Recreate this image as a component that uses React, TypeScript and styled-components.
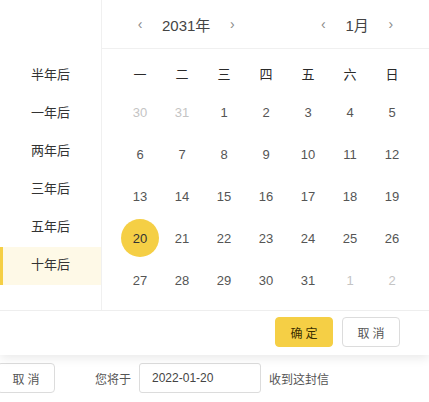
import * as React from 'react'
import styled, { createGlobalStyle } from 'styled-components'

const GlobalStyle = createGlobalStyle`
  body {
    margin: 0;
    background: #fff;
    font-family: "Liberation Sans", "Noto Sans CJK SC", sans-serif;
    color: #333;
    overflow: hidden;
  }
`

const accent = '#f5cf45'

const Page = styled.div`
  width: 429px;
  height: 402px;
  display: flex;
  flex-direction: column;
`

const Popup = styled.div`
  height: 355px;
  background: #fff;
  box-shadow: 0 3px 10px rgba(0, 0, 0, 0.09);
  display: flex;
  flex-direction: column;
  position: relative;
  z-index: 1;
`

const Body = styled.div`
  display: flex;
  height: 310px;
  border-bottom: 1px solid #eeeeee;
`

const Shortcuts = styled.ul`
  list-style: none;
  margin: 0;
  padding: 57px 0 0;
  width: 101px;
  border-right: 1px solid #f0f0f0;
`

const Shortcut = styled.li<{ $active?: boolean }>`
  height: 38px;
  display: flex;
  align-items: center;
  justify-content: center;
  padding: 0 3px 6px 0;
  box-sizing: border-box;
  font-size: 13px;
  color: #333;
  background: ${p => (p.$active ? '#fef9e7' : 'transparent')};
  border-left: 3px solid ${p => (p.$active ? accent : 'transparent')};
`

const Calendar = styled.div`
  flex: 1;
  display: flex;
  flex-direction: column;
`

const Header = styled.div`
  height: 48px;
  border-bottom: 1px solid #f0f0f0;
  display: flex;
  align-items: center;
  padding-left: 28px;
  gap: 71px;
`

const Switcher = styled.div`
  display: flex;
  align-items: center;
  gap: 12px;
`

const Arrow = styled.span`
  width: 20px;
  text-align: center;
  font-size: 14px;
  color: #8a8a8a;
`

const Label = styled.span`
  font-size: 15px;
  color: #444;
`

const Grid = styled.div`
  display: grid;
  grid-template-columns: repeat(7, 42px);
  grid-template-rows: 35px;
  grid-auto-rows: 42px;
  padding: 7px 16px 0 17px;
`

const WeekDay = styled.div`
  display: flex;
  align-items: center;
  justify-content: center;
  font-size: 13px;
  color: #2a2a2a;
`

const Day = styled.div<{ $muted?: boolean; $selected?: boolean }>`
  display: flex;
  align-items: center;
  justify-content: center;
  font-size: 13px;
  color: ${p => (p.$selected ? '#333' : p.$muted ? '#c4c4c4' : '#555')};
`

const Dot = styled.span<{ $selected?: boolean }>`
  width: 38px;
  height: 38px;
  border-radius: 50%;
  display: flex;
  align-items: center;
  justify-content: center;
  background: ${p => (p.$selected ? accent : 'transparent')};
`

const Footer = styled.div`
  flex: 1;
  display: flex;
  align-items: center;
  justify-content: flex-end;
  gap: 9px;
  padding: 0 29px 2px 0;
`

const Button = styled.button<{ $primary?: boolean }>`
  width: 58px;
  height: 30px;
  border-radius: 4px;
  font-family: inherit;
  font-size: 12px;
  letter-spacing: 3px;
  text-indent: 3px;
  cursor: pointer;
  color: ${p => (p.$primary ? '#3a3000' : '#555')};
  background: ${p => (p.$primary ? accent : '#fff')};
  border: 1px solid ${p => (p.$primary ? accent : '#dcdcdc')};
`

const Bar = styled.div`
  display: flex;
  align-items: center;
  height: 30px;
  margin: 8px 0 0 -3px;
  font-size: 12px;
  color: #555;
`

const Prefix = styled.span`
  margin: 0 8px 0 40px;
`

const DateInput = styled.div`
  width: 122px;
  height: 30px;
  box-sizing: border-box;
  border: 1px solid #dcdcdc;
  border-radius: 3px;
  display: flex;
  align-items: center;
  padding-left: 12px;
  font-size: 12px;
  color: #444;
  margin-right: 8px;
`

const shortcuts = ['半年后', '一年后', '两年后', '三年后', '五年后', '十年后']
const weekDays = ['一', '二', '三', '四', '五', '六', '日']

const days: { n: number; muted?: boolean }[] = [
  { n: 30, muted: true },
  { n: 31, muted: true },
  ...Array.from({ length: 31 }, (_, i) => ({ n: i + 1 })),
  { n: 1, muted: true },
  { n: 2, muted: true },
]

export default function App() {
  return (
    <Page>
      <GlobalStyle />
      <Popup>
        <Body>
          <Shortcuts>
            {shortcuts.map(s => (
              <Shortcut key={s} $active={s === '十年后'}>
                {s}
              </Shortcut>
            ))}
          </Shortcuts>
          <Calendar>
            <Header>
              <Switcher>
                <Arrow>‹</Arrow>
                <Label>2031年</Label>
                <Arrow>›</Arrow>
              </Switcher>
              <Switcher>
                <Arrow>‹</Arrow>
                <Label>1月</Label>
                <Arrow>›</Arrow>
              </Switcher>
            </Header>
            <Grid>
              {weekDays.map(w => (
                <WeekDay key={w}>{w}</WeekDay>
              ))}
              {days.map((d, i) => {
                const selected = !d.muted && d.n === 20
                return (
                  <Day key={i} $muted={d.muted} $selected={selected}>
                    <Dot $selected={selected}>{d.n}</Dot>
                  </Day>
                )
              })}
            </Grid>
          </Calendar>
        </Body>
        <Footer>
          <Button $primary>确定</Button>
          <Button>取消</Button>
        </Footer>
      </Popup>
      <Bar>
        <Button>取消</Button>
        <Prefix>您将于</Prefix>
        <DateInput>2022-01-20</DateInput>
        <span>收到这封信</span>
      </Bar>
    </Page>
  )
}
